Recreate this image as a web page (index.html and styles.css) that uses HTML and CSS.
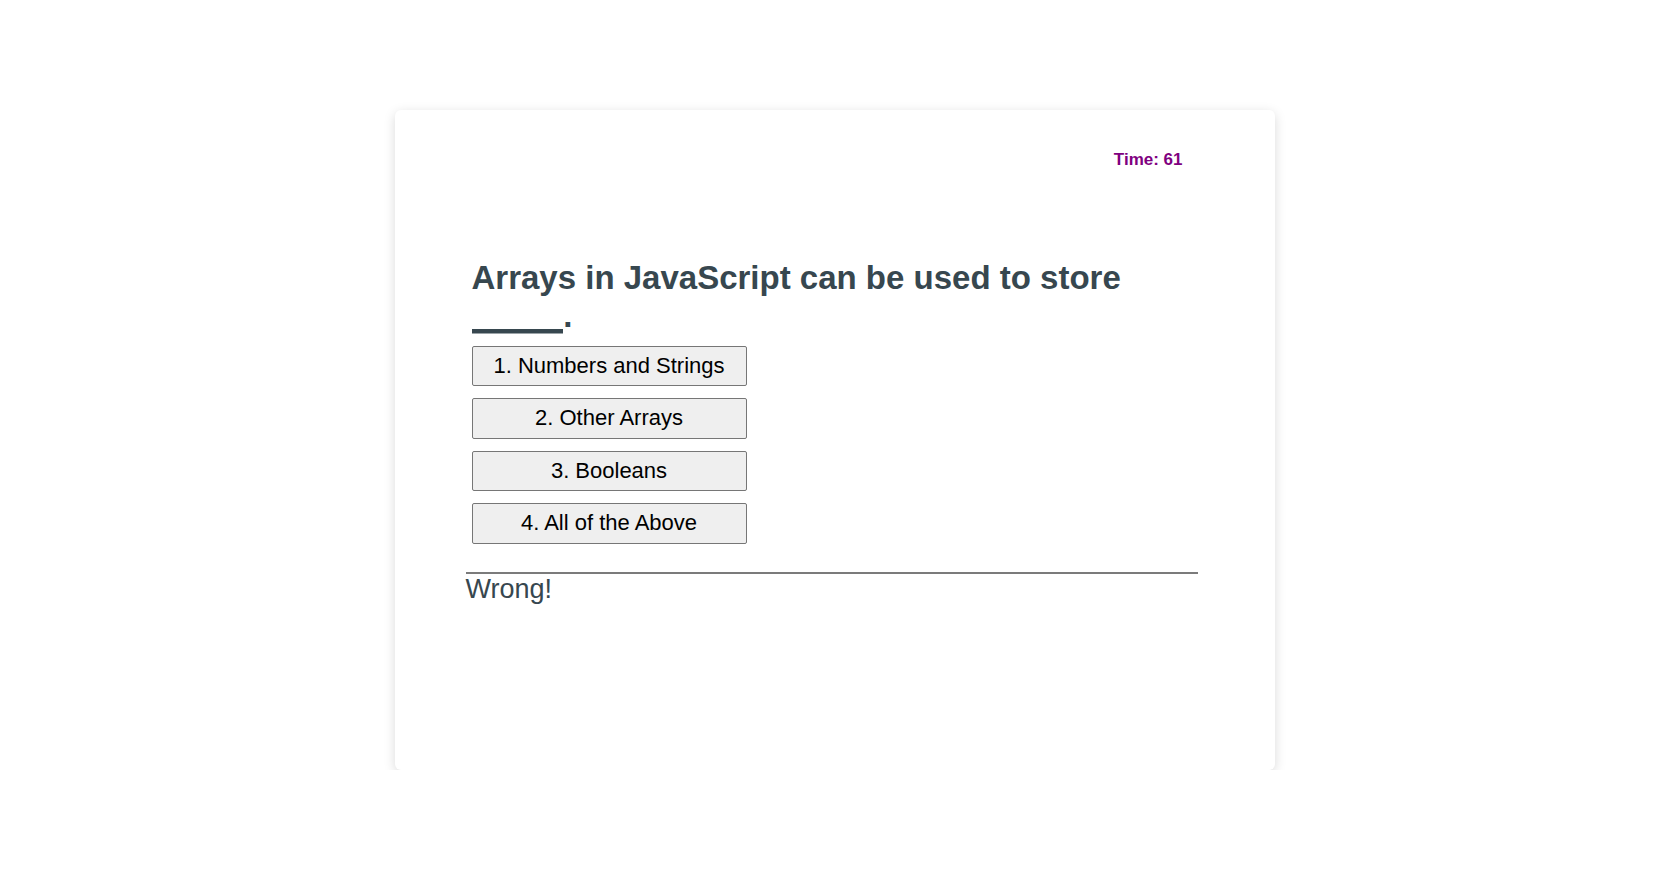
FILE: index.html
```html
<!DOCTYPE html>
<html lang="en">
<head>
<meta charset="utf-8">
<title>Code Quiz</title>
<link rel="stylesheet" href="styles.css">
</head>
<body>
<main class="card">
  <div class="timer-row"><span class="timer">Time: 61</span></div>
  <section class="question">
    <h1 class="question-title">Arrays in JavaScript can be used to store <span class="blank">_____</span>.</h1>
    <div class="choices">
      <button class="choice">1. Numbers and Strings</button>
      <button class="choice">2. Other Arrays</button>
      <button class="choice">3. Booleans</button>
      <button class="choice">4. All of the Above</button>
    </div>
  </section>
  <hr class="divider">
  <p class="feedback">Wrong!</p>
</main>
</body>
</html>
```

FILE: styles.css
```css
html, body {
  margin: 0;
  padding: 0;
  background: #ffffff;
}

body {
  font-family: "Liberation Sans", Arial, sans-serif;
  padding-top: 110px;
}

.card {
  box-sizing: border-box;
  width: 880px;
  height: 660px;
  margin: 0 auto;
  padding: 39.5px 77px 0 71px;
  background: #ffffff;
  border-radius: 6px;
  box-shadow: 0 3px 12px rgba(0, 0, 0, 0.15);
  display: flex;
  flex-direction: column;
}

.timer-row {
  display: flex;
  justify-content: flex-end;
  padding-right: 15px;
}

.timer {
  font-size: 17px;
  font-weight: bold;
  color: #800080;
  line-height: normal;
}

.question {
  padding-left: 6px;
  margin-top: 89.5px;
}

.question-title {
  margin: 0;
  font-size: 33px;
  font-weight: bold;
  line-height: normal;
  color: #37474f;
}

.blank {
  color: transparent;
  background-image: linear-gradient(#37474f, #37474f);
  background-repeat: no-repeat;
  background-size: 100% 4.5px;
  background-position: 0 32.4px;
}

.choices {
  display: flex;
  flex-direction: column;
  align-items: flex-start;
  gap: 12px;
  margin-top: 10.5px;
}

.choice {
  box-sizing: border-box;
  width: 275px;
  height: 40.5px;
  padding: 0;
  font-family: "Liberation Sans", Arial, sans-serif;
  font-size: 22px;
  color: #000000;
  background: #efefef;
  border: 1px solid #767676;
  border-radius: 2px;
  text-align: center;
}

.divider {
  margin: 28px 0 0 0;
  border: none;
  border-top: 2px solid #7b7b7b;
  height: 0;
}

.feedback {
  margin: 0;
  font-size: 27px;
  line-height: normal;
  color: #37474f;
}
```
